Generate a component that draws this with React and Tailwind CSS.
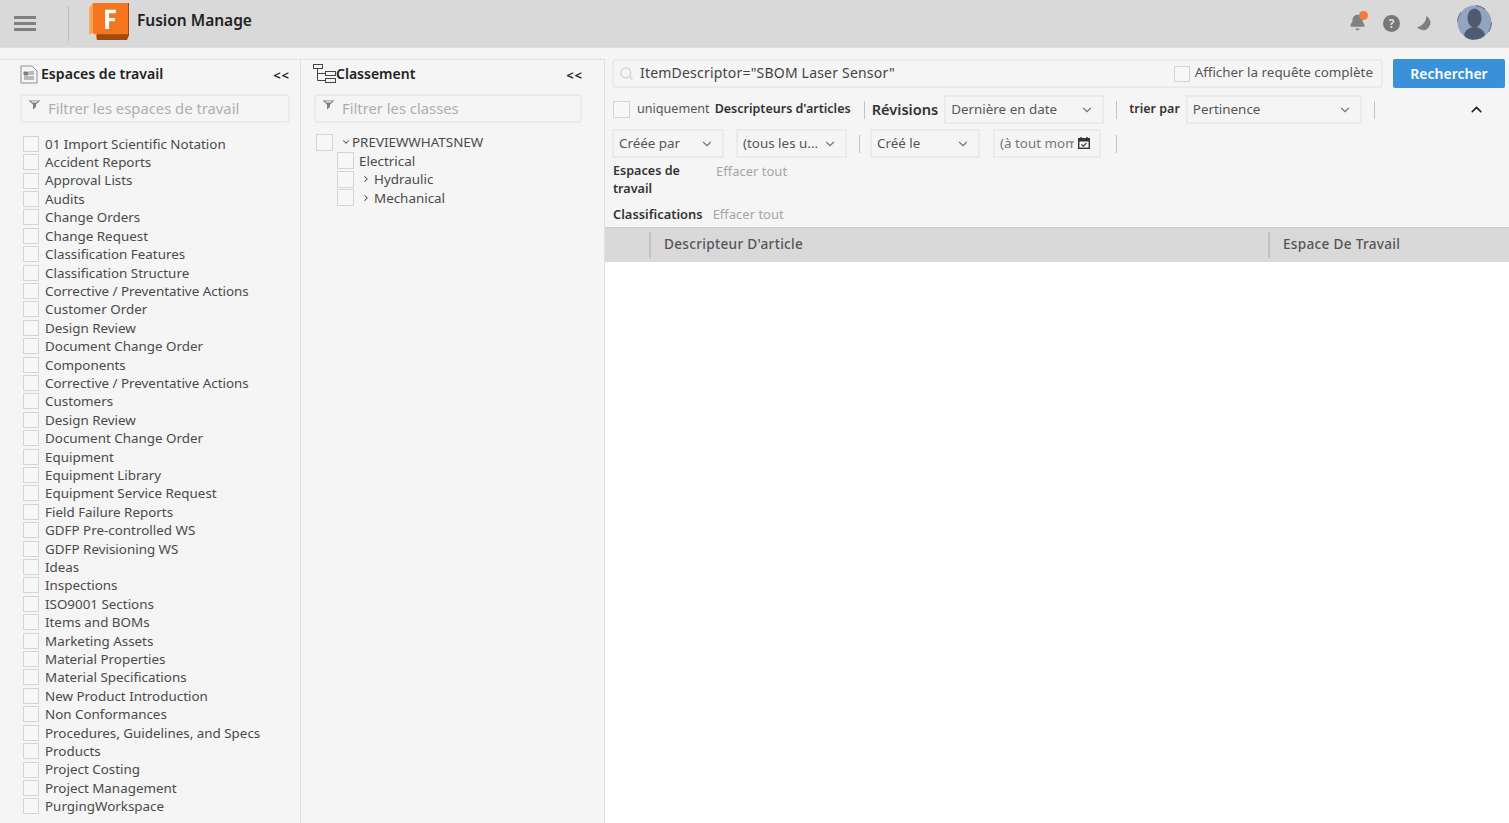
import React from 'react';
import { Search, ChevronDown, ChevronUp, ChevronRight, Bell } from 'lucide-react';

const workspaces = [
  '01 Import Scientific Notation', 'Accident Reports', 'Approval Lists', 'Audits', 'Change Orders', 'Change Request',
  'Classification Features', 'Classification Structure', 'Corrective / Preventative Actions', 'Customer Order',
  'Design Review', 'Document Change Order', 'Components', 'Corrective / Preventative Actions', 'Customers',
  'Design Review', 'Document Change Order', 'Equipment', 'Equipment Library', 'Equipment Service Request',
  'Field Failure Reports', 'GDFP Pre-controlled WS', 'GDFP Revisioning WS', 'Ideas', 'Inspections', 'ISO9001 Sections',
  'Items and BOMs', 'Marketing Assets', 'Material Properties', 'Material Specifications', 'New Product Introduction',
  'Non Conformances', 'Procedures, Guidelines, and Specs', 'Products', 'Project Costing', 'Project Management',
  'PurgingWorkspace',
];

const Box = ({ className = '' }) => (
  <span className={`block shrink-0 border border-[#d4d4d4] bg-[#f7f7f7] ${className}`} />
);

const Divider = ({ className = '' }) => <span className={`block w-px h-[18px] shrink-0 bg-[#b4c6d8] ${className}`} />;

const FilterIcon = () => (
  <svg width="13" height="10" viewBox="0 0 13 10" className="shrink-0">
    <path d="M0.5 0.5h12L8 4.5v2.5L5 9.5V4.5z" fill="#808080" />
    <path d="M3 1.3h7L8.5 2.6h-4z" fill="#f5f5f5" />
  </svg>
);

const FilterBox = ({ text, className = '' }) => (
  <div className={`flex items-center h-[29px] border-2 border-[#ebebeb] rounded-[4px] pl-[6px] text-[14.8px] text-[#aeaeae] ${className}`}>
    <span className="-mt-2 mr-[7px]"><FilterIcon /></span>
    {text}
  </div>
);

const Dropdown = ({ label, className = '', textColor = 'text-[#555555]' }) => (
  <div className={`flex items-center justify-between h-[29px] border-2 border-[#ebebeb] pl-[5px] pr-[8px] text-[13.4px] whitespace-nowrap ${textColor} ${className}`}>
    <span>{label}</span>
    <ChevronDown size={14} strokeWidth={2} className="text-[#777777]" />
  </div>
);

const Collapse = () => <span className="text-[13px] font-bold tracking-[1px] text-[#222222] leading-none">&lt;&lt;</span>;

const App = () => {
  return (
    <div className="w-[1509px] h-[823px] overflow-hidden bg-[#f5f5f5] font-['Noto_Sans',sans-serif] text-[#3c3c3c]">
      <header className="flex items-center h-12 bg-[#d9d9d9] border-b border-[#e2e2e2]">
        <svg width="22" height="15" viewBox="0 0 22 15" className="ml-[14px] shrink-0">
          <path d="M0 0h22v3H0zM0 6h22v3H0zM0 12h22v3H0z" fill="#808080" />
        </svg>
        <span className="block w-px h-[35px] ml-[32px] bg-[#bdbdbd]" />
        <svg width="41" height="37" viewBox="0 0 42 38" className="ml-[20px] -mt-[5px]">
          <path d="M4 3L8 0h33v33l-2 5H8z" fill="#a2490f" />
          <path d="M0 5L4 0h4v33l-5-2-3 1z" fill="#f9a65c" />
          <path d="M4 0h36v32H8l-4-1z" fill="#f6761f" />
          <path d="M16.5 7h11v3.4h-7v5h6v3.4h-6v8h-4z" fill="#ffffff" />
        </svg>
        <span className="ml-[7px] -mt-[6px] text-[15.5px] font-semibold text-[#222222]">Fusion Manage</span>
        <div className="ml-auto flex items-center">
          <span className="relative mr-[17px] -mt-[3px]">
            <Bell size={17} fill="#808080" className="text-[#808080]" />
            <span className="absolute -top-[3px] right-[-2px] w-[9px] h-[9px] rounded-full bg-[#f47a3c]" />
          </span>
          <span className="flex items-center justify-center w-[17px] h-[17px] mr-[17px] rounded-full bg-[#777777] text-[12px] font-bold leading-none text-[#d9d9d9]">?</span>
          <svg width="15" height="15" viewBox="0 0 16 16" className="mr-[25px]">
            <path d="M10 0A8 8 0 1 1 0 12A12 12 0 0 0 10 0z" fill="#808080" />
          </svg>
          <svg width="35" height="35" viewBox="0 0 35 35" className="mr-[17px] -mt-[2px]">
            <circle cx="17.5" cy="17.5" r="17" fill="#94a3bf" />
            <circle cx="17.5" cy="17.5" r="17" fill="none" stroke="#4a5568" strokeWidth="0.8" strokeDasharray="10 17" />
            <ellipse cx="17.5" cy="13" rx="7" ry="9.5" fill="#4f5a70" />
            <path d="M7 30c1-5 6-8 10.5-8S27 25 28 30c-3 3-6 4.5-10.5 4.5S10 33 7 30z" fill="#4f5a70" />
          </svg>
        </div>
      </header>

      <div className="flex h-[775px]">
        <aside className="w-[301px] shrink-0 mt-[11px] border-t border-r border-[#e0e0e0] pt-[4px] pl-5 pr-[10px]">
          <div className="flex items-center h-[20px]">
            <svg width="18" height="19" viewBox="0 0 18 19" className="shrink-0">
              <path d="M1 1h11l5 5v12H1z" fill="#f5f5f5" stroke="#8f8f8f" strokeWidth="1" />
              <path d="M4 7h4v3H4zM9 7h5M9 9h5M4 12h10M4 14h10" fill="#808080" stroke="#808080" strokeWidth="1" />
            </svg>
            <span className="ml-[3px] text-[14.1px] font-semibold text-[#222222]">Espaces de travail</span>
            <span className="ml-auto"><Collapse /></span>
          </div>
          <FilterBox text="Filtrer les espaces de travail" className="mt-[10px]" />
          <ul className="mt-[11.5px] ml-[3px]">
            {workspaces.map((name, i) => (
              <li key={i} className="flex items-center h-[18.42px] text-[13.4px] text-[#4a4a4a]">
                <Box className="w-4 h-4" />
                <span className="ml-[6px] whitespace-nowrap">{name}</span>
              </li>
            ))}
          </ul>
        </aside>

        <aside className="w-[304px] shrink-0 mt-[11px] border-t border-r border-[#e0e0e0] pt-[4px] pl-[12px] pr-[22px]">
          <div className="flex items-center h-[20px]">
            <svg width="23" height="20" viewBox="0 0 23 20" className="shrink-0">
              <g fill="none" stroke="#444444" strokeWidth="1">
                <rect x="0.5" y="0.5" width="9" height="4" />
                <rect x="12.5" y="7.5" width="10" height="4" />
                <rect x="12.5" y="14.5" width="10" height="4" />
                <path d="M4.5 4.5v12h8M4.5 9.5h8" />
              </g>
            </svg>
            <span className="-mt-[2px] text-[14px] font-semibold text-[#222222]">Classement</span>
            <span className="ml-auto -mr-[1px]"><Collapse /></span>
          </div>
          <FilterBox text="Filtrer les classes" className="mt-[10px] ml-[1px]" />
          <div className="mt-[10px] ml-[3px] text-[13.4px] text-[#4a4a4a]">
            <div className="flex items-center h-[18.5px]">
              <Box className="w-[17px] h-[17px]" />
              <ChevronDown size={10} strokeWidth={2.5} className="ml-[8px] mr-[1px]" />
              <span>PREVIEWWHATSNEW</span>
            </div>
            <div className="flex items-center h-[18.5px] pl-[21px]">
              <Box className="w-[17px] h-[17px]" />
              <span className="ml-[5px]">Electrical</span>
            </div>
            <div className="flex items-center h-[18.5px] pl-[21px]">
              <Box className="w-[17px] h-[17px]" />
              <ChevronRight size={10} strokeWidth={2.5} className="ml-[7px] mr-[3px]" />
              <span>Hydraulic</span>
            </div>
            <div className="flex items-center h-[18.5px] pl-[21px]">
              <Box className="w-[17px] h-[17px]" />
              <ChevronRight size={10} strokeWidth={2.5} className="ml-[7px] mr-[3px]" />
              <span>Mechanical</span>
            </div>
          </div>
        </aside>

        <main className="flex-1 min-w-0 flex flex-col">
          <div className="flex items-center mt-[11px] pl-[7px] pr-1">
            <div className="flex items-center w-[771px] h-[29px] border-2 border-[#ebebeb] rounded-[4px] pl-[5px] pr-[8px]">
              <Search size={15} className="text-[#d0d0d0] shrink-0" />
              <span className="ml-[6px] -mt-[2px] text-[14px] tracking-[0.2px] text-[#444444]">ItemDescriptor="SBOM Laser Sensor"</span>
              <Box className="w-4 h-4 ml-auto" />
              <span className="ml-[5px] -mt-[2px] text-[13.4px] text-[#555555]">Afficher la requête complète</span>
            </div>
            <button className="ml-[10px] w-[112px] h-[29px] rounded-[2px] bg-[#3a90d9] text-[14px] font-semibold text-white">Rechercher</button>
          </div>

          <div className="flex items-center mt-[7px] pl-[8px]">
            <Box className="w-[17px] h-[17px]" />
            <span className="ml-[7px] text-[12.6px] text-[#555555]">uniquement</span>
            <span className="ml-[5px] text-[12.5px] font-semibold text-[#333333]">Descripteurs d'articles</span>
            <Divider className="ml-[13px]" />
            <span className="ml-[7px] text-[14.6px] font-semibold text-[#333333]">Révisions</span>
            <Dropdown label="Dernière en date" className="ml-[6px] w-[160px]" />
            <Divider className="ml-3" />
            <span className="ml-3 text-[12.5px] font-semibold text-[#333333]">trier par</span>
            <Dropdown label="Pertinence" className="ml-[6px] w-[176px]" />
            <Divider className="ml-3" />
            <ChevronUp size={17} strokeWidth={2.2} className="ml-[93px] text-[#222222]" />
          </div>

          <div className="flex items-center mt-[5px] pl-[7px]">
            <Dropdown label="Créée par" className="w-[112px]" />
            <Dropdown label="(tous les u..." className="ml-[12px] w-[111px]" />
            <Divider className="ml-3" />
            <Dropdown label="Créé le" className="ml-[10px] w-[110px]" />
            <div className="flex items-center justify-between ml-[13px] w-[108px] h-[29px] border-2 border-[#ebebeb] pl-[5px] pr-[9px] text-[13.4px] text-[#777777]">
              <span className="w-[74px] overflow-hidden whitespace-nowrap">(à tout moment)</span>
              <svg width="12" height="12" viewBox="0 0 12 12" className="shrink-0 -mt-[2px]">
                <path d="M3 0v2M9 0v2" stroke="#333333" strokeWidth="1.4" />
                <rect x="0.7" y="1.7" width="10.6" height="9.6" fill="none" stroke="#333333" strokeWidth="1.4" />
                <path d="M1 2h10v2.5H1z" fill="#333333" />
                <path d="M3.5 7.5l1.7 1.6 3.3-3" fill="none" stroke="#333333" strokeWidth="1.2" />
              </svg>
            </div>
            <Divider className="ml-[15px]" />
          </div>

          <div className="flex items-start mt-[4px] pl-2">
            <span className="w-[103px] text-[12.6px] leading-[18px] font-semibold text-[#333333]">Espaces de<br />travail</span>
            <span className="text-[13px] leading-[18px] text-[#a5a5a5]">Effacer tout</span>
          </div>
          <div className="flex items-center mt-[8px] pl-2 h-[18px]">
            <span className="text-[12.9px] font-semibold text-[#333333]">Classifications</span>
            <span className="ml-[10px] text-[13px] text-[#a5a5a5]">Effacer tout</span>
          </div>

          <div className="flex items-center h-[35px] mt-[3px] bg-[#d9d9d9] border-t border-[#cfcfcf] text-[13.6px] font-medium text-[#555555]">
            <span className="block w-[2px] h-[26px] ml-[44px] bg-[#c2c2c2]" />
            <span className="ml-[13px] w-[604px] tracking-[0.3px] -mt-[1px]">Descripteur D'article</span>
            <span className="block w-[2px] h-[26px] bg-[#c2c2c2]" />
            <span className="ml-[13px] tracking-[0.3px] -mt-[1px]">Espace De Travail</span>
          </div>
          <div className="flex-1 bg-white" />
        </main>
      </div>
    </div>
  );
};

export default App;
